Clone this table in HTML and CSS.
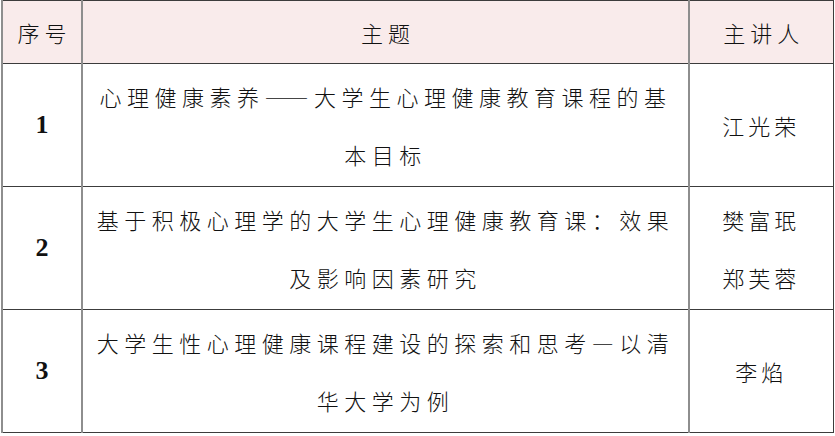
FILE: index.html
```html
<!DOCTYPE html>
<html lang="zh-CN">
<head>
<meta charset="utf-8">
<title>课程表</title>
<link rel="stylesheet" href="styles.css">
</head>
<body>
<table class="schedule">
  <colgroup>
    <col class="c-no">
    <col class="c-topic">
    <col class="c-speaker">
  </colgroup>
  <thead>
    <tr class="head-row">
      <th>序号</th>
      <th>主题</th>
      <th>主讲人</th>
    </tr>
  </thead>
  <tbody>
    <tr class="body-row">
      <td class="num">1</td>
      <td class="topic">心理健康素养——大学生心理健康教育课程的基<br>本目标</td>
      <td class="speaker">江光荣</td>
    </tr>
    <tr class="body-row">
      <td class="num">2</td>
      <td class="topic">基于积极心理学的大学生心理健康教育课：效果<br>及影响因素研究</td>
      <td class="speaker">樊富珉<br>郑芙蓉</td>
    </tr>
    <tr class="body-row">
      <td class="num">3</td>
      <td class="topic">大学生性心理健康课程建设的探索和思考—以清<br>华大学为例</td>
      <td class="speaker">李焰</td>
    </tr>
  </tbody>
</table>
</body>
</html>
```
FILE: styles.css
```css
html, body {
  margin: 0;
  padding: 0;
  background: #ffffff;
}

body {
  padding: 0 0 0 1px;
}

.schedule {
  border-collapse: collapse;
  table-layout: fixed;
  width: 831px;
  font-family: "Noto Sans CJK SC", sans-serif;
  font-weight: 300;
  color: #111111;
  font-size: 22px;
}

.c-no { width: 80px; }
.c-topic { width: 607px; }
.c-speaker { width: 144px; }

.schedule th,
.schedule td {
  padding: 0;
  text-align: center;
  vertical-align: middle;
  border-top: 1px solid #3c3c3c;
  border-bottom: 1px solid #3c3c3c;
  border-left: 2px solid #8e8e8e;
  border-right: 2px solid #8e8e8e;
}

.schedule th:last-child,
.schedule td:last-child {
  border-right: 1px solid #3c3c3c;
}

.head-row th {
  height: 62px;
  background: #f9ebeb;
  font-weight: 300;
  letter-spacing: 5px;
  padding-left: 5px;
}

.body-row td {
  height: 122px;
}

.num {
  font-family: "Liberation Serif", serif;
  font-weight: 700;
  font-size: 26px;
  color: #111111;
  padding-top: 6px;
}

.topic {
  line-height: 58px;
  letter-spacing: 5.5px;
  padding-left: 5px;
}

.speaker {
  line-height: 58px;
  letter-spacing: 4px;
  padding-left: 4px;
}
```
